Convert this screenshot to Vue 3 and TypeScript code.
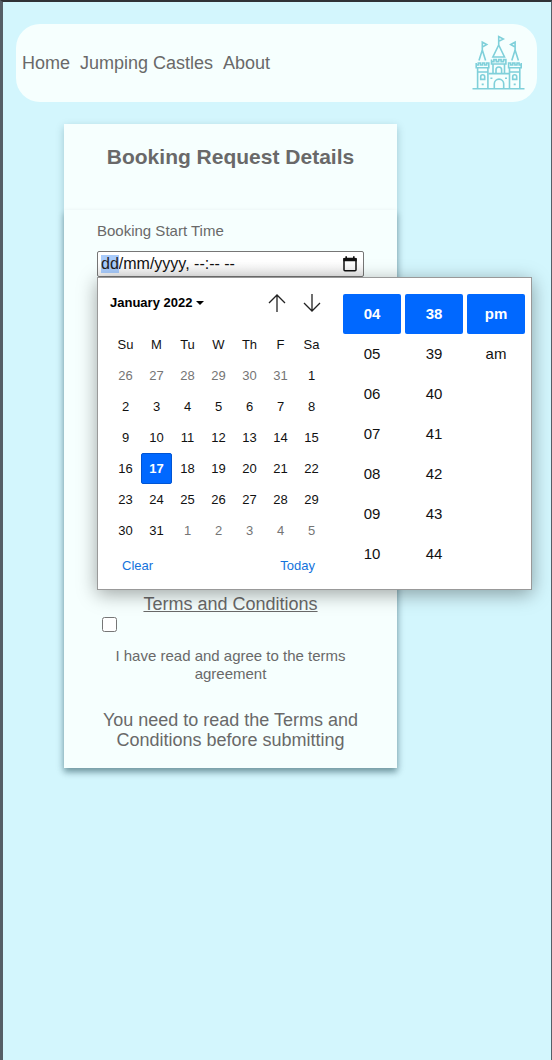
<script setup lang="ts">
import { onMounted, ref } from 'vue'

interface Day {
  n: number
  muted: boolean
  selected: boolean
}

const weekdays = ['Su', 'M', 'Tu', 'W', 'Th', 'F', 'Sa']

const weeks: Day[][] = Array.from({ length: 6 }, (_, w) =>
  Array.from({ length: 7 }, (_, d) => {
    const date = new Date(2021, 11, 26 + w * 7 + d)
    const inMonth = date.getMonth() === 0
    return { n: date.getDate(), muted: !inMonth, selected: inMonth && date.getDate() === 17 }
  }),
)

const timeColumns = [
  { name: 'Hours', values: ['04', '05', '06', '07', '08', '09', '10'] },
  { name: 'Minutes', values: ['38', '39', '40', '41', '42', '43', '44'] },
  { name: 'AM/PM', values: ['pm', 'am'] },
]

const startTime = ref('dd/mm/yyyy, --:-- --')
const agreed = ref(false)
const field = ref<HTMLInputElement | null>(null)

onMounted(() => {
  field.value?.focus({ preventScroll: true })
  field.value?.setSelectionRange(0, 2)
})
</script>

<template>
  <div class="page">
    <header class="nav">
      <nav class="links">
        <a href="#home">Home</a>
        <a href="#castles">Jumping Castles</a>
        <a href="#about">About</a>
      </nav>
      <svg class="castle" viewBox="0 0 54 56" role="img" aria-label="Castle logo">
        <path d="M.5 53.8h52" />
        <path d="M26.7 10V1.6l4.6 2.4-4.6 2.4M26.7 10l-5.8 12h11.6z" />
        <path d="M19.5 24.6v4.4h14.4v-4.4h-2.4v2h-2.4v-2h-2.4v2h-2.4v-2h-2.4v2h-2.4v-2zM21 29v9.2M32.5 29v9.2M24 38.2v-3.4a2.8 2.8 0 0 1 5.6 0v3.4" />
        <path d="M16.5 38.6h20.6M22.3 53.8v-5a4.7 4.7 0 0 1 9.4 0v5M18.4 43.3h2M33 43.3h2" />
        <g id="tower">
          <path d="M10.3 15V7.2l4.4 2.4-4.4 2.4M10.3 15L7 25.4M10.3 15L13.6 25.4" />
          <path d="M4.2 28v4.8h12.6V28h-2.1v2h-2.1v-2h-2.1v2H8.4v-2H6.3v2H4.2M5.6 32.8v21M15.9 32.8v21M5.6 37h10.3" />
          <path d="M8.7 44.4v-2.6a2 2 0 0 1 4 0v2.6zM9.7 49.4h2" />
        </g>
        <use href="#tower" transform="translate(53.4 0) scale(-1 1)" />
        <path d="M38.7 7.2l4.4 1.2" stroke="none" />
      </svg>
    </header>

    <main class="card">
      <h1 class="title">Booking Request Details</h1>
      <form class="form" @submit.prevent>
        <div class="booking">
          <label class="label" for="start">Booking Start Time</label>
          <div class="control">
            <input id="start" ref="field" v-model="startTime" class="datetime" type="text" autocomplete="off" spellcheck="false" />
            <button class="open" type="button" aria-label="Show date picker">
              <svg viewBox="0 0 16 18"><rect x="2" y="3.5" width="12" height="12.2" rx="1" fill="none" stroke="#111" stroke-width="1.5" /><path d="M1.3 3h13.4v3.3H1.3zM3.4 1.2h1.6v2H3.4zM11 1.2h1.6v2H11z" fill="#111" /></svg>
            </button>

            <div class="picker">
              <section class="calendar">
                <div class="month-row">
                  <button class="month" type="button">January 2022 <svg viewBox="0 0 8 4"><path d="M0 0h8L4 4z" /></svg></button>
                  <button class="arrow" type="button" aria-label="Previous month">
                    <svg viewBox="0 0 20 20"><path d="M10 19V2M2 10l8-8 8 8" /></svg>
                  </button>
                  <button class="arrow" type="button" aria-label="Next month">
                    <svg viewBox="0 0 20 20"><path d="M10 1v17M2 10l8 8 8-8" /></svg>
                  </button>
                </div>
                <table class="days">
                  <thead>
                    <tr>
                      <th v-for="d in weekdays" :key="d" scope="col">{{ d }}</th>
                    </tr>
                  </thead>
                  <tbody>
                    <tr v-for="(week, i) in weeks" :key="i">
                      <td v-for="(day, j) in week" :key="j">
                        <button type="button" class="day" :class="{ muted: day.muted, selected: day.selected }">{{ day.n }}</button>
                      </td>
                    </tr>
                  </tbody>
                </table>
                <div class="actions">
                  <button type="button">Clear</button>
                  <button type="button">Today</button>
                </div>
              </section>
              <section class="times">
                <div v-for="col in timeColumns" :key="col.name" class="time-col" role="group" :aria-label="col.name">
                  <button v-for="(v, i) in col.values" :key="v" type="button" class="time" :class="{ selected: i === 0 }">{{ v }}</button>
                </div>
              </section>
            </div>
          </div>
        </div>

        <a class="terms" href="#terms">Terms and Conditions</a>
        <input id="agree" v-model="agreed" class="agree" type="checkbox" />
        <label class="agree-text" for="agree">I have read and agree to the terms agreement</label>
        <p class="notice">You need to read the Terms and Conditions before submitting</p>
      </form>
    </main>
  </div>
</template>

<style>
body {
  margin: 0;
}
</style>

<style scoped>
.page {
  box-sizing: border-box;
  min-height: 100vh;
  padding: 22px 14px 40px 13px;
  border: solid #555e66;
  border-width: 2px 1px 0 3px;
  border-top-color: #303236;
  background: #d3f6fd;
  color: #696969;
  font-family: "Liberation Sans", Arial, sans-serif;
  font-size: 18px;
  line-height: 20px;
}

button {
  padding: 0;
  border: 0;
  background: none;
  color: inherit;
  font: inherit;
}

.nav {
  display: flex;
  align-items: center;
  justify-content: space-between;
  padding: 11px 11px 11px 6px;
  border-radius: 24px;
  background: #f6fffe;
}

.links {
  display: flex;
  gap: 10px;
}

.links a {
  color: inherit;
  text-decoration: none;
}

.castle {
  width: 54px;
  height: 56px;
  fill: none;
  stroke: #7fd0da;
  stroke-width: 1.6;
}

.card {
  box-sizing: border-box;
  width: calc(100% - 96px);
  max-width: 333px;
  margin: 22px 48px 0;
  background: #f6fffe;
  box-shadow: 0 3px 8px rgba(0, 60, 70, 0.25);
}

.title {
  margin: 0;
  padding: 21px 16px 41px;
  font-size: 21px;
  line-height: 24px;
  text-align: center;
}

.form {
  display: flex;
  flex-direction: column;
  padding: 11px 33px 18px;
  box-shadow: 0 4px 6px rgba(0, 40, 50, 0.32);
  text-align: center;
  background: #f6fffe;
}

.booking {
  min-height: 373px;
  text-align: left;
}

.label {
  display: block;
  margin-bottom: 10px;
  font-size: 15px;
}

.control {
  position: relative;
}

.datetime {
  display: block;
  box-sizing: border-box;
  width: 100%;
  height: 26px;
  padding: 0 30px 0 3px;
  border: 1px solid #767676;
  border-radius: 2px;
  outline: 0;
  background: linear-gradient(#fff 40%, #eee);
  color: #111;
  font: 16px "Liberation Sans", Arial, sans-serif;
}

.datetime::selection {
  background: #a8cbfb;
  color: #222;
}

.open {
  position: absolute;
  top: 4px;
  right: 6px;
  width: 16px;
  height: 18px;
}

.open svg {
  display: block;
}

.picker {
  position: absolute;
  z-index: 1;
  top: 100%;
  left: 0;
  display: flex;
  gap: 16px;
  padding: 10px 6px 13px 12px;
  border: 1px solid #999;
  background: #fff;
  box-shadow: 0 4px 18px rgba(0, 0, 0, 0.36);
  color: #111;
  font-size: 13px;
}

.month-row {
  display: flex;
  align-items: center;
  gap: 4px;
  height: 30px;
  margin-bottom: 11px;
}

.month {
  margin-right: auto;
  color: #000;
  font-weight: bold;
  white-space: nowrap;
}

.month svg {
  width: 8px;
  height: 4px;
  margin-bottom: 2px;
}

.arrow {
  width: 31px;
  height: 30px;
}

.arrow svg {
  display: block;
  width: 20px;
  height: 20px;
  margin: auto;
  fill: none;
  stroke: #222;
  stroke-width: 1.3;
}

.days {
  border-collapse: collapse;
}

.days th,
.days td {
  width: 31px;
  height: 31px;
  padding: 0;
  font-weight: normal;
  text-align: center;
}

.day {
  display: block;
  box-sizing: border-box;
  width: 31px;
  height: 31px;
}

.muted {
  color: #757575;
}

.selected {
  border-radius: 2px;
  background: #0068ff;
  color: #fff;
  font-weight: bold;
}

.day.selected {
  border: 1px solid #0055d4;
}

.actions {
  display: flex;
  justify-content: space-between;
  margin-top: 10px;
  padding: 0 12px;
  color: #1473dc;
}

.times {
  display: flex;
  gap: 4px;
  margin-top: 6px;
}

.time-col {
  display: flex;
  flex-direction: column;
}

.time {
  width: 58px;
  height: 40px;
  font-size: 15px;
}

.terms {
  align-self: center;
  color: inherit;
}

.agree {
  width: 15px;
  height: 15px;
  margin: 3px 0 15px 5px;
}

.agree-text {
  font-size: 15px;
  line-height: 18px;
}

.notice {
  margin: 27px 0 0;
}
</style>
